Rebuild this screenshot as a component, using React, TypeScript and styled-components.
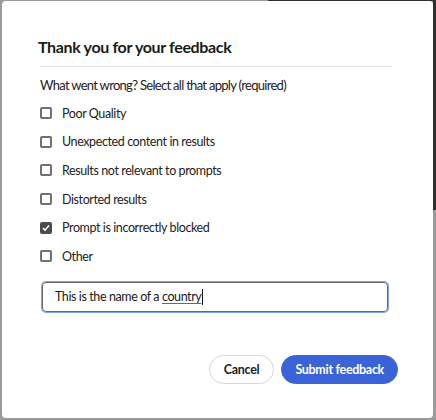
import { useState } from 'react';
import styled, { createGlobalStyle } from 'styled-components';

const GlobalStyle = createGlobalStyle`
  html, body {
    margin: 0;
    padding: 0;
  }
  body {
    width: 436px;
    height: 420px;
    overflow: hidden;
    font-family: Lato, "Open Sans", sans-serif;
    background:
      linear-gradient(#30302e, #30302e) right top / 3px 210px no-repeat,
      linear-gradient(#30302e, #30302e) 268px 0 / 168px 1px no-repeat,
      #9a9a9a;
  }
`;

const OPTIONS = [
  'Poor Quality',
  'Unexpected content in results',
  'Results not relevant to prompts',
  'Distorted results',
  'Prompt is incorrectly blocked',
  'Other',
];

const Dialog = styled.section`
  box-sizing: border-box;
  margin: 1px 3px 0 2px;
  height: 417px;
  padding: 35px 35px 0 38px;
  display: flex;
  flex-direction: column;
  background: #fff;
  border-radius: 4px;
`;

const Title = styled.h2`
  margin: 0 0 0 -2px;
  font-size: 16px;
  font-weight: 700;
  letter-spacing: -0.35px;
  line-height: 22px;
  color: #1a1a1a;
`;

const Divider = styled.hr`
  margin: 8px 6px 0 0;
  border: 0;
  height: 1px;
  background: #e2e2e2;
`;

const Prompt = styled.p`
  margin: 9px 0 0;
  font-size: 13px;
  letter-spacing: -0.7px;
  line-height: 18px;
  color: #222;
`;

const List = styled.ul`
  margin: 5px 0 0;
  padding: 0;
  list-style: none;
  display: flex;
  flex-direction: column;
`;

const Row = styled.li`
  height: 28.6px;
  display: flex;
  align-items: center;
  gap: 10px;
  font-size: 12.5px;
  letter-spacing: -0.4px;
  color: #222;
  cursor: pointer;
`;

const Box = styled.span<{ $checked: boolean }>`
  box-sizing: border-box;
  width: 12px;
  height: 12px;
  border-radius: 2px;
  border: 2px solid ${(p) => (p.$checked ? '#4b4b4b' : '#707070')};
  background: ${(p) => (p.$checked ? '#4b4b4b' : '#fff')};
  display: flex;
  align-items: center;
  justify-content: center;
`;

const Field = styled.div`
  box-sizing: border-box;
  margin: 11px 10px 0 2px;
  height: 30px;
  padding: 0 12px;
  display: flex;
  align-items: center;
  border: 1px solid #6a6a6a;
  border-radius: 4px;
  box-shadow: 0 0 0 1px #7ea4e6;
  font-size: 12.5px;
  letter-spacing: -0.4px;
  color: #1a1a1a;
`;

const Underlined = styled.span`
  text-decoration: underline;
  text-decoration-color: #4a63d4;
  text-underline-offset: 2px;
`;

const Caret = styled.span`
  display: inline-block;
  width: 1px;
  height: 16px;
  margin-left: 1px;
  background: #111;
`;

const Actions = styled.div`
  margin-top: 43px;
  display: flex;
  justify-content: flex-end;
  gap: 7px;
`;

const Button = styled.button<{ $primary?: boolean }>`
  box-sizing: border-box;
  height: 29px;
  padding: 0 ${(p) => (p.$primary ? '13px' : '14px')};
  border-radius: 15px;
  border: 1px solid ${(p) => (p.$primary ? '#3a63d7' : '#d5d5d5')};
  background: ${(p) => (p.$primary ? '#3a63d7' : '#fff')};
  color: ${(p) => (p.$primary ? '#fff' : '#222')};
  font-family: inherit;
  font-size: 12.5px;
  letter-spacing: -0.3px;
  font-weight: 700;
  cursor: pointer;
`;

export default function App() {
  const [checked, setChecked] = useState<string[]>(['Prompt is incorrectly blocked']);

  const toggle = (option: string) =>
    setChecked((prev) =>
      prev.includes(option) ? prev.filter((o) => o !== option) : [...prev, option],
    );

  return (
    <>
      <GlobalStyle />
      <Dialog>
        <Title>Thank you for your feedback</Title>
        <Divider />
        <Prompt>What went wrong? Select all that apply (required)</Prompt>
        <List>
          {OPTIONS.map((option) => {
            const isOn = checked.includes(option);
            return (
              <Row key={option} onClick={() => toggle(option)}>
                <Box $checked={isOn}>
                  {isOn && (
                    <svg width="8" height="8" viewBox="0 0 8 8">
                      <path d="M1 4.2 L3.1 6.2 L7 1.6" fill="none" stroke="#fff" strokeWidth="1.6" />
                    </svg>
                  )}
                </Box>
                {option}
              </Row>
            );
          })}
        </List>
        <Field>
          This is the name of a&nbsp;<Underlined>country</Underlined>
          <Caret />
        </Field>
        <Actions>
          <Button>Cancel</Button>
          <Button $primary>Submit feedback</Button>
        </Actions>
      </Dialog>
    </>
  );
}
